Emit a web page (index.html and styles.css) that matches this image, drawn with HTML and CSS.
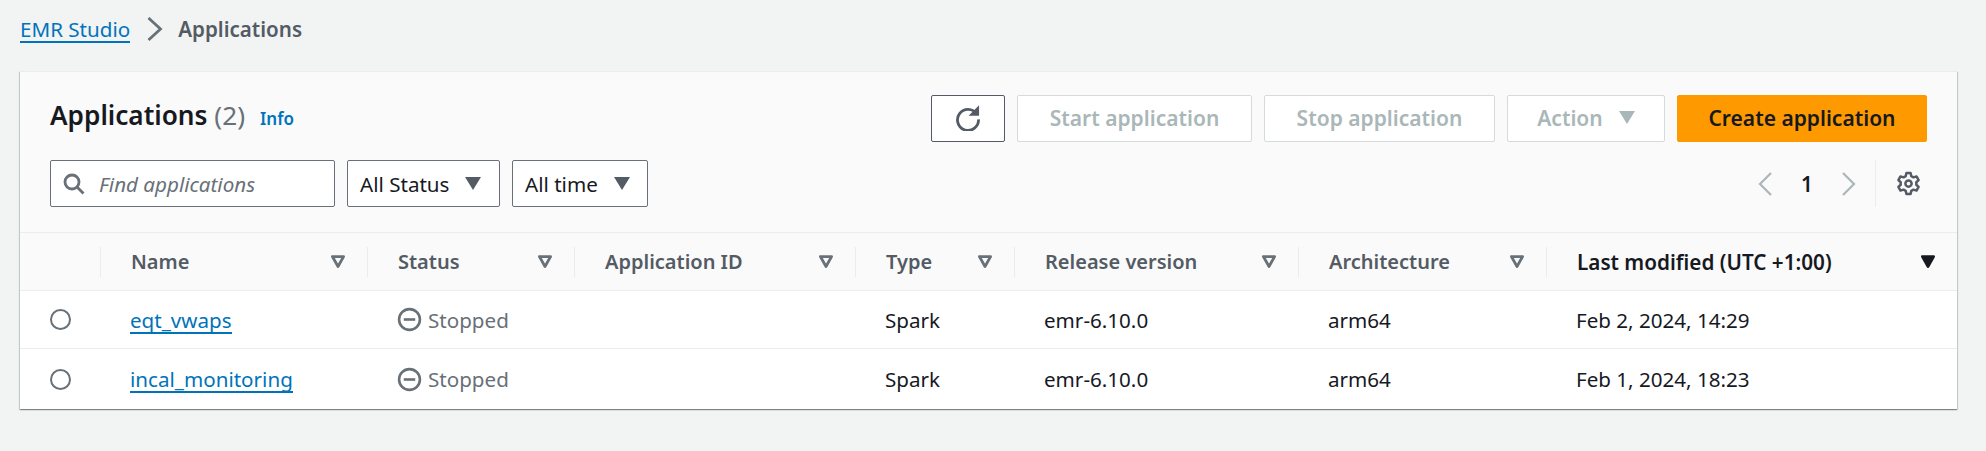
FILE: index.html
```html
<!DOCTYPE html>
<html lang="en">
<head>
<meta charset="utf-8">
<title>Applications</title>
<link rel="stylesheet" href="styles.css">
</head>
<body>
<nav class="crumbs">
  <a class="link crumb-link" href="#">EMR Studio</a>
  <svg class="crumb-sep" viewBox="0 0 16 24"><path d="M2 1l12 11L2 23" /></svg>
  <span class="crumb-current">Applications</span>
</nav>
<section class="card">
  <header class="card-head">
    <div class="head-row">
      <h2 class="title">Applications <span class="count">(2)</span><a class="info" href="#">Info</a></h2>
      <div class="actions">
        <button class="btn btn-icon"><svg class="ico-refresh" viewBox="0 0 24 24"><path d="M19.5 9.500A9 9 0 1 0 21 14" /><path class="fill" d="M21.500 2v9h-9z" /></svg></button>
        <button class="btn btn-off btn-start">Start application</button>
        <button class="btn btn-off btn-stop">Stop application</button>
        <button class="btn btn-off btn-action">Action<i class="tri tri-off"></i></button>
        <button class="btn btn-primary">Create application</button>
      </div>
    </div>
    <div class="tools-row">
      <div class="search">
        <svg class="ico-search" viewBox="0 0 22 22"><circle cx="9" cy="9" r="7" /><path d="M14 14l6.500 6.500" /></svg>
        <span class="placeholder">Find applications</span>
      </div>
      <div class="select sel-status">All Status<i class="tri"></i></div>
      <div class="select sel-time">All time<i class="tri"></i></div>
      <div class="pager">
        <svg class="chev" viewBox="0 0 14 24"><path d="M13 1L2 12l11 11" /></svg>
        <span class="page-num">1</span>
        <svg class="chev" viewBox="0 0 14 24"><path d="M1 1l11 11L1 23" /></svg>
        <span class="pager-rule"><svg class="ico-gear" viewBox="0 0 24 24"><path d="M10 2h4l.7 3 2 1.100 3-.9 2 3.500-2.200 2.100v2.400l2.200 2.100-2 3.500-3-.9-2 1.100-.7 3h-4l-.7-3-2-1.100-3 .9-2-3.500 2.200-2.100v-2.400L2.300 8.700l2-3.500 3 .9 2-1.100z" /><circle cx="12" cy="12" r="3" /></svg></span>
      </div>
    </div>
  </header>
  <div class="table">
    <div class="tr thead">
      <div class="th th-blank"></div>
      <div class="th"><span>Name</span><svg class="sort" viewBox="0 0 14 12"><path d="M2.500 2h9l-4.500 8z" /></svg></div>
      <div class="th"><span>Status</span><svg class="sort" viewBox="0 0 14 12"><path d="M2.500 2h9l-4.500 8z" /></svg></div>
      <div class="th"><span>Application ID</span><svg class="sort" viewBox="0 0 14 12"><path d="M2.500 2h9l-4.500 8z" /></svg></div>
      <div class="th"><span>Type</span><svg class="sort" viewBox="0 0 14 12"><path d="M2.500 2h9l-4.500 8z" /></svg></div>
      <div class="th"><span>Release version</span><svg class="sort" viewBox="0 0 14 12"><path d="M2.500 2h9l-4.500 8z" /></svg></div>
      <div class="th"><span>Architecture</span><svg class="sort" viewBox="0 0 14 12"><path d="M2.500 2h9l-4.500 8z" /></svg></div>
      <div class="th th-active"><span>Last modified (UTC +1:00)</span><svg class="sort sort-on" viewBox="0 0 14 12"><path d="M2.500 2h9l-4.500 8z" /></svg></div>
    </div>
    <div class="tr row">
      <div class="td td-radio"><i class="radio"></i></div>
      <div class="td"><a class="link" href="#">eqt_vwaps</a></div>
      <div class="td status"><svg class="ico-stop" viewBox="0 0 24 24"><circle cx="12" cy="12" r="10" /><path d="M6.500 12h11" /></svg>Stopped</div>
      <div class="td"></div>
      <div class="td">Spark</div>
      <div class="td">emr-6.10.0</div>
      <div class="td">arm64</div>
      <div class="td">Feb 2, 2024, 14:29</div>
    </div>
    <div class="tr row">
      <div class="td td-radio"><i class="radio"></i></div>
      <div class="td"><a class="link" href="#">incal_monitoring</a></div>
      <div class="td status"><svg class="ico-stop" viewBox="0 0 24 24"><circle cx="12" cy="12" r="10" /><path d="M6.500 12h11" /></svg>Stopped</div>
      <div class="td"></div>
      <div class="td">Spark</div>
      <div class="td">emr-6.10.0</div>
      <div class="td">arm64</div>
      <div class="td">Feb 1, 2024, 18:23</div>
    </div>
  </div>
</section>
</body>
</html>
```

FILE: styles.css
```css
* { box-sizing: border-box; }
html, body { margin: 0; height: 100%; }
body {
  background: #f2f3f3;
  color: #16191f;
  font-family: "Noto Sans", "Open Sans", sans-serif;
  font-size: 20.6px;
  padding: 0 29px 0 20px;
  overflow: hidden;
}
svg { display: block; fill: none; stroke: currentColor; }
a { text-decoration: none; }
.link {
  display: inline-block;
  color: #0073bb;
  border-bottom: 2px solid #0073bb;
  line-height: 24px;
}
.crumbs {
  height: 71px;
  display: flex;
  align-items: flex-start;
  padding-top: 17px;
}
.crumb-link { height: 26px; }
.crumb-sep { width: 17px; height: 24px; margin: 0 15px 0 16px; color: #687078; stroke-width: 2.8; }
.crumb-current { color: #545b64; font-weight: 600; line-height: 24px; }
.card {
  background: #fff;
  box-shadow: 0 1px 1px 0 rgba(0,28,36,.3), 1px 1px 1px 0 rgba(0,28,36,.15), -1px 1px 1px 0 rgba(0,28,36,.15);
}
.card-head {
  background: #fafafa;
  padding: 23px 30px 25px;
  border-top: 1px solid #eaeded;
  border-bottom: 1px solid #eaeded;
  height: 162px;
}
.head-row, .tools-row { display: flex; align-items: flex-start; }
.tools-row { margin-top: 18px; gap: 12px; }
.title {
  margin: 1px 0 0;
  font-size: 26.2px;
  line-height: 38px;
  font-weight: 600;
  display: flex;
  align-items: baseline;
  white-space: pre;
}
.count { color: #687078; font-weight: 400; }
.info { color: #0073bb; font-size: 17px; font-weight: 600; margin-left: 15px; }
.actions { margin-left: auto; display: flex; gap: 12px; }
.btn {
  height: 47px;
  border-radius: 2px;
  border: 1px solid #d5dbdb;
  background: #fff;
  font: 600 21px "Noto Sans", sans-serif;
  padding: 0 0 2px;
  display: flex;
  align-items: center;
  justify-content: center;
}
.btn-icon { width: 74px; border-color: #545b64; color: #545b64; padding: 0 0 3px; }
.btn-off { color: #aab7b8; }
.btn-start { width: 235px; }
.btn-stop { width: 231px; }
.btn-action { width: 158px; }
.btn-primary { width: 250px; background: #f90; border-color: #f90; color: #16191f; }
.ico-refresh { width: 28px; height: 28px; stroke-width: 2.4; }
.ico-refresh .fill { fill: currentColor; stroke: none; }
.tri {
  display: inline-block;
  width: 0;
  height: 0;
  margin-left: 16px;
  border-left: 8px solid transparent;
  border-right: 8px solid transparent;
  border-top: 13px solid #545b64;
}
.tri-off { border-top-color: #aab7b8; margin-left: 16px; }
.search, .select {
  height: 47px;
  background: #fff;
  border: 1px solid #687078;
  border-radius: 2px;
  display: flex;
  align-items: center;
}
.search { width: 285px; padding-left: 12px; }
.ico-search { width: 22px; height: 22px; color: #687078; stroke-width: 2.800; }
.placeholder { margin-left: 14px; color: #687078; font-style: italic; }
.select { padding-left: 12px; }
.sel-status { width: 153px; }
.sel-time { width: 136px; }
.pager { margin-left: auto; display: flex; align-items: center; height: 47px; padding-right: 6px; }
.chev { width: 14px; height: 24px; color: #aab7b8; stroke-width: 2.2; }
.page-num { width: 70px; text-align: center; font-weight: 600; }
.pager-rule {
  margin-left: 19px;
  padding-left: 20px;
  height: 47px;
  border-left: 1px solid #eaeded;
  display: flex;
  align-items: center;
}
.ico-gear { width: 25px; height: 25px; color: #545b64; stroke-width: 2.4; stroke-linejoin: round; }
.tr {
  display: grid;
  grid-template-columns: 80px 267px 207px 281px 159px 284px 248px 1fr;
}
.thead { height: 58px; background: #fafafa; border-bottom: 1px solid #eaeded; align-items: center; }
.th {
  height: 30px;
  border-left: 1px solid #eaeded;
  padding: 0 20px 0 30px;
  display: flex;
  align-items: center;
  justify-content: space-between;
  color: #545b64;
  font-size: 20px;
  font-weight: 600;
}
.th-blank { border-left: 0; }
.th-active { color: #16191f; font-size: 20.7px; }
.sort { width: 18px; height: 15px; stroke-width: 2.2; color: #687078; stroke-linejoin: round; }
.sort-on { color: #16191f; fill: currentColor; }
.row { height: 58px; align-items: center; border-bottom: 1px solid #eaeded; }
.row:last-child { border-bottom: 0; height: 60px; }
.td { padding-left: 30px; color: #16191f; white-space: nowrap; }
.td-radio { padding-left: 30px; display: flex; }
.radio { width: 21px; height: 21px; border: 2px solid #687078; border-radius: 50%; background: #fff; }
.status { display: flex; align-items: center; gap: 6px; color: #687078; padding-left: 30px; }
.ico-stop { width: 25px; height: 25px; stroke-width: 2.500; }
```
